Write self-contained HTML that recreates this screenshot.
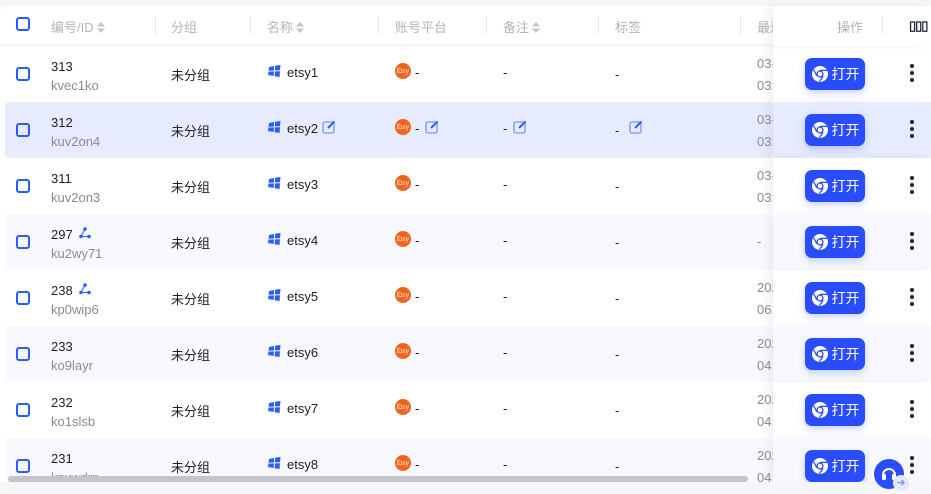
<!DOCTYPE html>
<html><head><meta charset="utf-8"><style>
*{margin:0;padding:0;box-sizing:border-box}
body{width:931px;height:493px;overflow:hidden;background:#f5f6f8;font-family:"Liberation Sans","Noto Sans CJK SC",sans-serif;font-size:13px;color:#222;position:relative}
.card{position:absolute;left:0;top:6px;width:931px;height:487px;background:#fff;border-radius:6px 0 0 0}
.a{position:absolute}
.hd{color:#b5b5b9;font-size:13px;top:17px}
.sep{position:absolute;top:16px;width:1px;height:18px;background:#e8e8ec}
.row{position:absolute;left:0;width:773px;height:56px}
.cb{position:absolute;left:16px;width:14px;height:14px;border:2px solid #2a5cff;border-radius:3px}
.sub{color:#8a8a96}
.dash{color:#222}
.etsy{position:absolute;width:16px;height:16px;border-radius:50%;background:#f1641e;color:#fff;font-family:"Liberation Serif",serif;font-size:7px;line-height:16px;text-align:center}
.edit{position:absolute;width:14px;height:14px}
.btn{position:absolute;left:805px;width:60px;height:32px;background:#2a4cff;border-radius:7px;color:#fff;font-size:14px;line-height:32px;box-shadow:0 3px 8px rgba(42,76,255,.25)}
.dots{position:absolute;left:910px;width:4px}
.dots i{display:block;width:4px;height:4px;border-radius:50%;background:#1f2233;margin-bottom:3px}
.date{color:#8a8a96;line-height:22px;width:16px;overflow:hidden;white-space:nowrap}
.srt{display:inline-block;vertical-align:-1px;margin-left:3px}
</style></head><body>
<div class="card"></div>
<div class="a" style="left:0;top:6px;width:931px;height:40px;border-bottom:2px solid #f4f5fb"></div>
<div class="cb" style="top:17px"></div>
<div class="a hd" style="left:51px">编号/ID<svg class="srt" width="8" height="11" viewBox="0 0 8 11"><path d="M4 0L8 4.5H0Z M4 11L8 6.5H0Z" fill="#c4c4ca"/></svg></div>
<div class="sep" style="left:155px"></div>
<div class="a hd" style="left:171px">分组</div>
<div class="sep" style="left:250px"></div>
<div class="a hd" style="left:267px">名称<svg class="srt" width="8" height="11" viewBox="0 0 8 11"><path d="M4 0L8 4.5H0Z M4 11L8 6.5H0Z" fill="#c4c4ca"/></svg></div>
<div class="sep" style="left:378px"></div>
<div class="a hd" style="left:395px">账号平台</div>
<div class="sep" style="left:486px"></div>
<div class="a hd" style="left:503px">备注<svg class="srt" width="8" height="11" viewBox="0 0 8 11"><path d="M4 0L8 4.5H0Z M4 11L8 6.5H0Z" fill="#c4c4ca"/></svg></div>
<div class="sep" style="left:598px"></div>
<div class="a hd" style="left:615px">标签</div>
<div class="sep" style="left:740px"></div>
<div class="a hd" style="left:757px;width:16px;overflow:hidden;white-space:nowrap">最近</div>
<div id="rows"></div>
<div class="a" style="left:773px;top:6px;width:158px;height:40px;background:#fff;box-shadow:-6px 0 8px rgba(0,0,0,.05)"></div>
<div class="a hd" style="left:837px">操作</div>
<div class="sep" style="left:882px"></div>
<div class="a" style="left:909px;top:18px;font-weight:bold;color:#1f2233;font-size:13px;letter-spacing:-1px">▯▯▯</div>
<script>
var d=[["313","kvec1ko","etsy1",["03-","03:"],0],["312","kuv2on4","etsy2",["03-","03:"],0],["311","kuv2on3","etsy3",["03-","03:"],0],["297","ku2wy71","etsy4",["-"],1],["238","kp0wip6","etsy5",["202","06:"],1],["233","ko9layr","etsy6",["202","04:"],0],["232","ko1slsb","etsy7",["202","04:"],0],["231","knxwdrp","etsy8",["202","04:"],0]];
var ed='<svg viewBox="0 0 14 14"><rect x="1" y="2" width="11" height="11" rx="2" fill="none" stroke="#8aa4ff" stroke-width="1.6"/><path d="M6 8 L12.5 1.5" stroke="#2a5cff" stroke-width="2"/></svg>';
var win='<svg width="13" height="12" viewBox="0 0 13 12"><path d="M1 2 L6 1 L6 5.5 L0.5 5.8Z M7 0.8 L12.5 0 L12 5.2 L7 5.4Z M0.5 6.6 L6 6.4 L5.6 11 L0 10Z M7 6.4 L12 6.3 L11.5 12 L6.6 11.2Z" fill="#2a5cff"/></svg>';
var chrome='<svg width="18" height="18" viewBox="0 0 18 18" style="vertical-align:-4px;margin-right:3px"><circle cx="9" cy="9" r="8" fill="#fff"/><circle cx="9" cy="9" r="3.6" fill="#2a4cff"/><circle cx="9" cy="9" r="2.3" fill="#fff"/><path d="M9 5.4 L16 5.4 M6 11 L2.5 4.5 M12 11 L8.5 16.8" stroke="#2a4cff" stroke-width="1.3"/></svg>';
var h='';
d.forEach(function(r,i){var y=46+56*i,bg=i==1?'#e6ebfd':(i%2==1?'#f8f9fe':'#fff');
var c=y+28;
h+='<div class="row" style="top:'+y+'px;background:'+bg+';left:5px;width:768px;border-radius:4px"></div>';
h+='<div class="a" style="left:773px;top:'+y+'px;width:158px;height:56px;background:'+bg+';box-shadow:-6px 0 8px rgba(0,0,0,.05)"></div>';
h+='<div class="cb" style="top:'+(c-7)+'px"></div>';
h+='<div class="a" style="left:51px;top:'+(c-17)+'px;line-height:19px">'+r[0]+(r[4]?' <svg width="12" height="12" viewBox="0 0 12 12" style="margin-left:3px"><circle cx="6" cy="2" r="1.8" fill="#2a5cff"/><circle cx="2" cy="9.5" r="1.8" fill="#2a5cff"/><circle cx="10" cy="9.5" r="1.8" fill="#2a5cff"/><path d="M6 2 L2 9.5 L10 9.5" stroke="#2a5cff" stroke-width="1" fill="none"/></svg>':'')+'<br><span class="sub">'+r[1]+'</span></div>';
h+='<div class="a" style="left:171px;top:'+(c-9)+'px">未分组</div>';
h+='<div class="a" style="left:268px;top:'+(c-9)+'px">'+win+'</div>';
h+='<div class="a" style="left:287px;top:'+(c-9)+'px">'+r[2]+'</div>';
h+='<div class="etsy" style="left:395px;top:'+(c-11)+'px">Etsy</div>';
h+='<div class="a dash" style="left:415px;top:'+(c-9)+'px">-</div>';
h+='<div class="a dash" style="left:503px;top:'+(c-9)+'px">-</div>';
h+='<div class="a dash" style="left:615px;top:'+(c-7)+'px">-</div>';
if(i==1){h+='<div class="edit" style="left:322px;top:'+(c-10)+'px">'+ed+'</div><div class="edit" style="left:425px;top:'+(c-10)+'px">'+ed+'</div><div class="edit" style="left:513px;top:'+(c-10)+'px">'+ed+'</div><div class="edit" style="left:629px;top:'+(c-10)+'px">'+ed+'</div>';}
h+='<div class="a date" style="left:757px;top:'+(r[3].length>1?c-21:c-11)+'px">'+r[3].join('<br>')+'</div>';
h+='<div class="btn" style="top:'+(c-16)+'px;text-align:center">'+chrome+'打开</div>';
h+='<div class="dots" style="top:'+(c-10)+'px"><i></i><i></i><i></i></div>';
});
document.getElementById('rows').innerHTML=h;
</script>
<div class="a" style="left:8px;top:476px;width:740px;height:6px;border-radius:3px;background:#c4c4ca"></div>
<div class="a" style="left:0;top:482px;width:931px;height:11px;background:#f5f6f8"></div>
<div class="a" style="left:872px;top:457px;width:34px;height:34px;border-radius:50%;background:#2a4cff;border:2px solid #fff">
<svg width="30" height="30" viewBox="0 0 30 30"><path d="M9 16 A6 6 0 0 1 21 16" stroke="#fff" stroke-width="2" fill="none"/><rect x="8" y="15" width="4" height="6" rx="1.5" fill="#fff"/><rect x="18" y="15" width="4" height="6" rx="1.5" fill="#fff"/></svg></div>
<div class="a" style="left:893px;top:475px;width:16px;height:16px;border-radius:50%;background:#e4e9fb;color:#7c95f0;font-size:11px;text-align:center;line-height:16px">➜</div>
</body></html>
